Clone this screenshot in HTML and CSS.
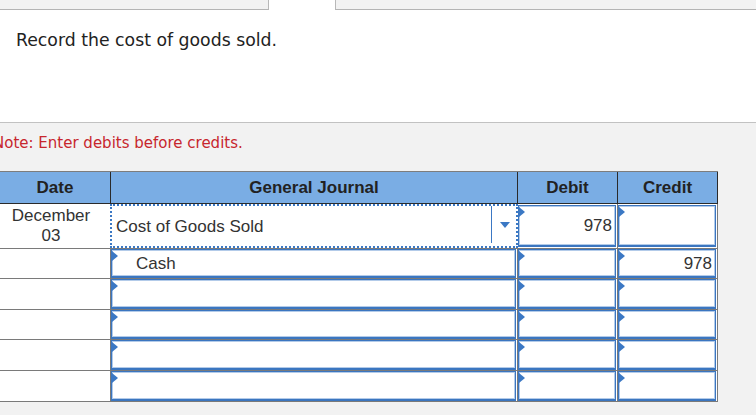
FILE: index.html
```html
<!DOCTYPE html>
<html>
<head>
<meta charset="utf-8">
<link rel="stylesheet" href="styles.css">
</head>
<body>
<div class="tabs">
  <div class="tab tab-left"></div>
  <div class="tab tab-active"></div>
  <div class="tab tab-right"></div>
</div>
<div class="question">Record the cost of goods sold.</div>
<div class="note">Note: Enter debits before credits.</div>
<table class="journal">
  <colgroup>
    <col class="c-date"><col class="c-acct"><col class="c-amt"><col class="c-amt">
  </colgroup>
  <thead>
    <tr>
      <th>Date</th>
      <th>General Journal</th>
      <th>Debit</th>
      <th>Credit</th>
    </tr>
  </thead>
  <tbody>
    <tr class="r1">
      <td class="date">December<br>03</td>
      <td class="acct-cell">
        <div class="select">
          <span class="select-text">Cost of Goods Sold</span>
          <span class="select-btn"><span class="arrow"></span></span>
        </div>
      </td>
      <td><div class="inp num"><span class="flag"></span>978</div></td>
      <td><div class="inp num"><span class="flag"></span></div></td>
    </tr>
    <tr class="r2">
      <td></td>
      <td><div class="inp indent"><span class="flag"></span>Cash</div></td>
      <td><div class="inp num"><span class="flag"></span></div></td>
      <td><div class="inp num"><span class="flag"></span>978</div></td>
    </tr>
    <tr class="r3">
      <td></td>
      <td><div class="inp"><span class="flag"></span></div></td>
      <td><div class="inp num"><span class="flag"></span></div></td>
      <td><div class="inp num"><span class="flag"></span></div></td>
    </tr>
    <tr class="r2">
      <td></td>
      <td><div class="inp"><span class="flag"></span></div></td>
      <td><div class="inp num"><span class="flag"></span></div></td>
      <td><div class="inp num"><span class="flag"></span></div></td>
    </tr>
    <tr class="r3">
      <td></td>
      <td><div class="inp"><span class="flag"></span></div></td>
      <td><div class="inp num"><span class="flag"></span></div></td>
      <td><div class="inp num"><span class="flag"></span></div></td>
    </tr>
    <tr class="r3">
      <td></td>
      <td><div class="inp"><span class="flag"></span></div></td>
      <td><div class="inp num"><span class="flag"></span></div></td>
      <td><div class="inp num"><span class="flag"></span></div></td>
    </tr>
  </tbody>
</table>
</body>
</html>
```

FILE: styles.css
```css
* { box-sizing: border-box; }

html, body {
  margin: 0;
  padding: 0;
  background: #f2f2f2;
  width: 756px;
  height: 415px;
  overflow: hidden;
}

body {
  font-family: "Liberation Sans", Arial, sans-serif;
}

.tabs {
  display: flex;
  height: 10px;
}
.tab { height: 10px; }
.tab-left {
  width: 269px;
  border-right: 1px solid #b8b8b8;
  border-bottom: 1px solid #b4b4b4;
}
.tab-active {
  width: 66px;
  background: #fff;
}
.tab-right {
  flex: 1;
  border-left: 1px solid #b8b8b8;
  border-bottom: 1px solid #b4b4b4;
}

.question {
  background: #fff;
  height: 113px;
  padding: 20px 0 0 16px;
  border-bottom: 1px solid #c2c2c2;
  font-family: "DejaVu Sans", Verdana, sans-serif;
  font-size: 17.3px;
  line-height: 20px;
  color: #222;
}

.note {
  margin: 11px 0 0 -7px;
  font-family: "DejaVu Sans", Verdana, sans-serif;
  font-size: 15px;
  line-height: 18px;
  color: #c7262d;
}

.journal {
  margin-top: 19px;
  border-collapse: separate;
  border-spacing: 0;
  table-layout: fixed;
  width: 718px;
  border-top: 1px solid #7d7d7d;
}
.c-date { width: 111px; }
.c-acct { width: 407px; }
.c-amt { width: 100px; }

.journal th {
  height: 32px;
  padding: 0;
  background: #7aade4;
  border-right: 1px solid #2a2a2a;
  border-bottom: 1px solid #2a2a2a;
  font-weight: bold;
  font-size: 17px;
  color: #222;
  text-align: center;
  vertical-align: middle;
}

.journal td {
  padding: 0;
  background: #fff;
  border-right: 1px solid #7a7a7a;
  border-bottom: 1px solid #7a7a7a;
  vertical-align: top;
  font-size: 17px;
  color: #333;
}

.r1 td { height: 45px; }
.r2 td { height: 30px; }
.r3 td { height: 31px; }

.journal td.date {
  text-align: center;
  vertical-align: middle;
  line-height: 20px;
  padding-right: 8px;
}

.select {
  height: 44px;
  margin: 0 -1px;
  border: 2px dotted #3b78c4;
  display: flex;
  align-items: stretch;
  position: relative;
  background: #fff;
}
.select-text {
  flex: 1;
  display: flex;
  align-items: center;
  padding-left: 4px;
  padding-top: 1px;
}
.select-btn {
  width: 25px;
  margin: 0 0 3px 0;
  border-left: 1px solid #3b78c4;
  display: flex;
  align-items: center;
  justify-content: center;
}
.arrow {
  width: 0;
  height: 0;
  border-left: 5px solid transparent;
  border-right: 5px solid transparent;
  border-top: 6px solid #3b78c4;
  margin-left: 1px;
}

.inp {
  position: relative;
  height: 100%;
  margin: 0 1px 0 0;
  border: 1px solid #3b76c0;
  border-bottom-width: 2px;
  box-shadow: inset 0 0 0 1px #b3cbe9;
  display: flex;
  align-items: center;
  padding: 1px 4px 0 5px;
  font-size: 17px;
  color: #333;
  background: #fff;
}
.r1 .inp {
  height: 42px;
  margin-top: 1px;
}
.inp.num {
  justify-content: flex-end;
  padding-right: 3px;
}
.inp.indent {
  padding-left: 24px;
}

.flag {
  position: absolute;
  left: 0;
  top: 1px;
  width: 0;
  height: 0;
  border-left: 6px solid #3b78c4;
  border-top: 5px solid transparent;
  border-bottom: 5px solid transparent;
}
```
